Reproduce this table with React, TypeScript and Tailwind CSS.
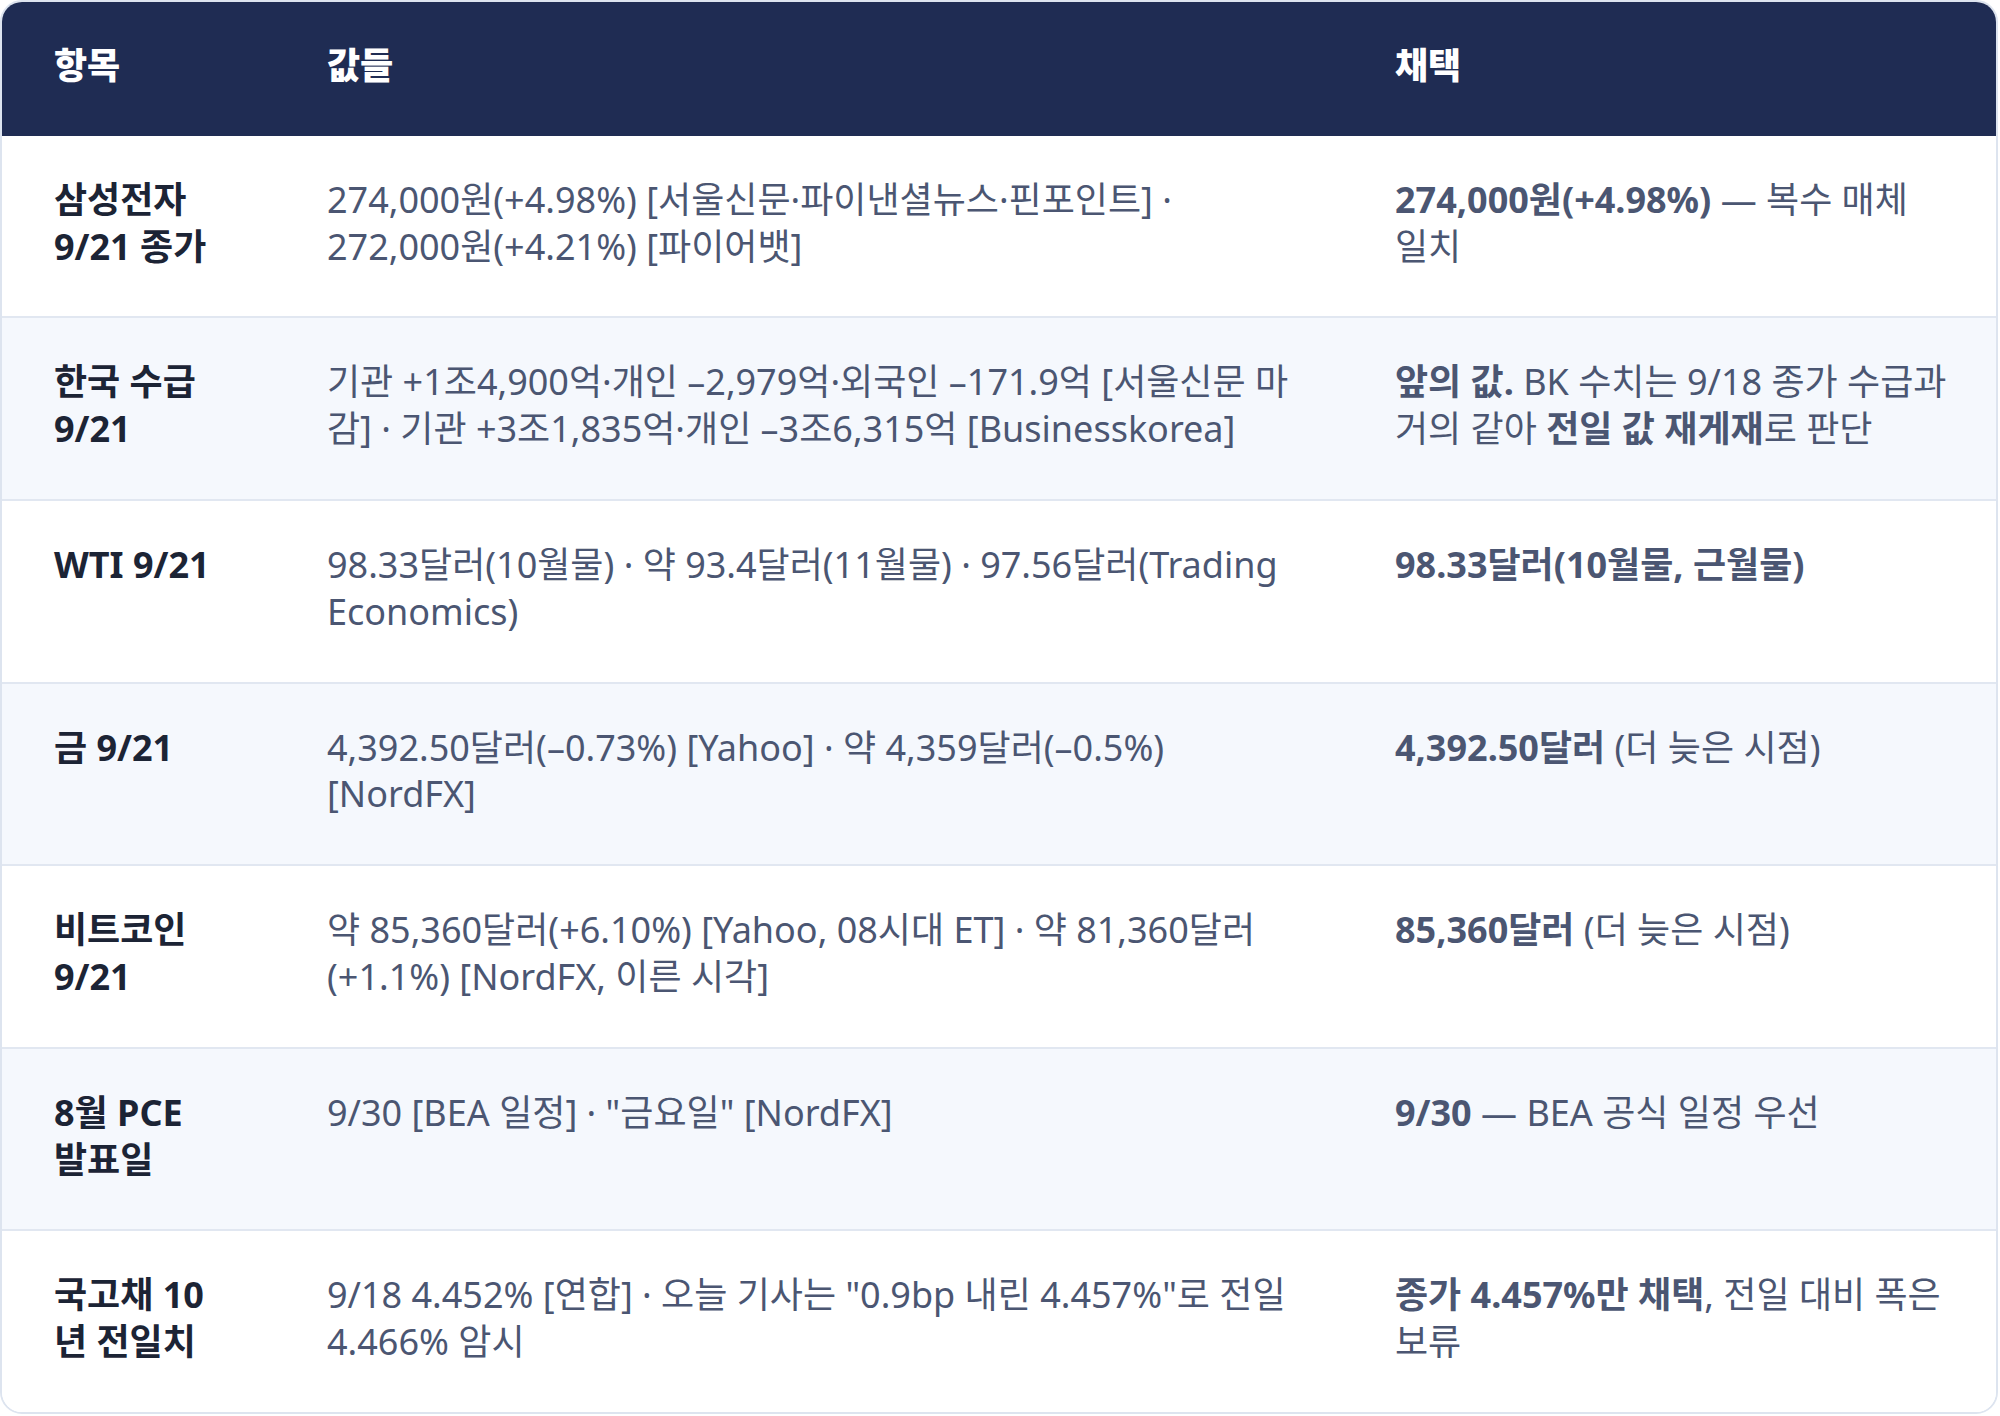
import React from "react";

type Row = {
  label: React.ReactNode;
  values: React.ReactNode;
  pick: React.ReactNode;
};

const B = ({ children }: { children: React.ReactNode }) => (
  <span className="font-bold">{children}</span>
);

const rows: Row[] = [
  {
    label: (<>삼성전자<br />9/21 종가</>),
    values: (<>274,000원(+4.98%) [서울신문·파이낸셜뉴스·핀포인트] ·<br />272,000원(+4.21%) [파이어뱃]</>),
    pick: (<><B>274,000원(+4.98%)</B> — 복수 매체<br />일치</>),
  },
  {
    label: (<>한국 수급<br />9/21</>),
    values: (<>기관 +1조4,900억·개인 –2,979억·외국인 –171.9억 [서울신문 마<br />감] · 기관 +3조1,835억·개인 –3조6,315억 [Businesskorea]</>),
    pick: (<><B>앞의 값.</B> BK 수치는 9/18 종가 수급과<br />거의 같아 <B>전일 값 재게재</B>로 판단</>),
  },
  {
    label: (<>WTI 9/21</>),
    values: (<>98.33달러(10월물) · 약 93.4달러(11월물) · 97.56달러(Trading<br />Economics)</>),
    pick: (<><B>98.33달러(10월물, 근월물)</B></>),
  },
  {
    label: (<>금 9/21</>),
    values: (<>4,392.50달러(–0.73%) [Yahoo] · 약 4,359달러(–0.5%)<br />[NordFX]</>),
    pick: (<><B>4,392.50달러</B> (더 늦은 시점)</>),
  },
  {
    label: (<>비트코인<br />9/21</>),
    values: (<>약 85,360달러(+6.10%) [Yahoo, 08시대 ET] · 약 81,360달러<br />(+1.1%) [NordFX, 이른 시각]</>),
    pick: (<><B>85,360달러</B> (더 늦은 시점)</>),
  },
  {
    label: (<>8월 PCE<br />발표일</>),
    values: (<>9/30 [BEA 일정] · "금요일" [NordFX]</>),
    pick: (<><B>9/30</B> — BEA 공식 일정 우선</>),
  },
  {
    label: (<>국고채 10<br />년 전일치</>),
    values: (<>9/18 4.452% [연합] · 오늘 기사는 "0.9bp 내린 4.457%"로 전일<br />4.466% 암시</>),
    pick: (<><B>종가 4.457%만 채택</B>, 전일 대비 폭은<br />보류</>),
  },
];

export default function App() {
  return (
    <div
      className="w-[2000px] min-h-[1416px] bg-white"
      style={{ fontFamily: '"Noto Sans", "Noto Sans CJK KR", sans-serif' }}
    >
      <div className="w-[1998px] overflow-hidden rounded-[22px] border-2 border-[#dde4ef] bg-white text-[36px] leading-[46.8px]">
        <div className="grid grid-cols-[273px_1068px_1fr] bg-[#1f2c53] text-white font-extrabold">
          <div className="pl-[52px] pr-[52px] pt-[41px] pb-[46px]">항목</div>
          <div className="pl-[52px] pr-[52px] pt-[41px] pb-[46px]">값들</div>
          <div className="pl-[52px] pr-[52px] pt-[41px] pb-[46px]">채택</div>
        </div>
        {rows.map((r, i) => (
          <div
            key={i}
            className={
              "grid grid-cols-[273px_1068px_1fr] " +
              (i % 2 === 1 ? "bg-[#f5f8fd] " : "bg-white ") +
              (i < rows.length - 1 ? "border-b-2 border-[#e1e7f1]" : "")
            }
          >
            <div className="pl-[52px] pr-[20px] pt-[41px] pb-[46px] font-bold text-[#1c2435]">
              {r.label}
            </div>
            <div className="pl-[52px] pr-[20px] pt-[41px] pb-[46px] text-[#4b5672] whitespace-nowrap">
              {r.values}
            </div>
            <div className="pl-[52px] pr-[20px] pt-[41px] pb-[46px] text-[#4b5672] whitespace-nowrap">
              {r.pick}
            </div>
          </div>
        ))}
      </div>
    </div>
  );
}
